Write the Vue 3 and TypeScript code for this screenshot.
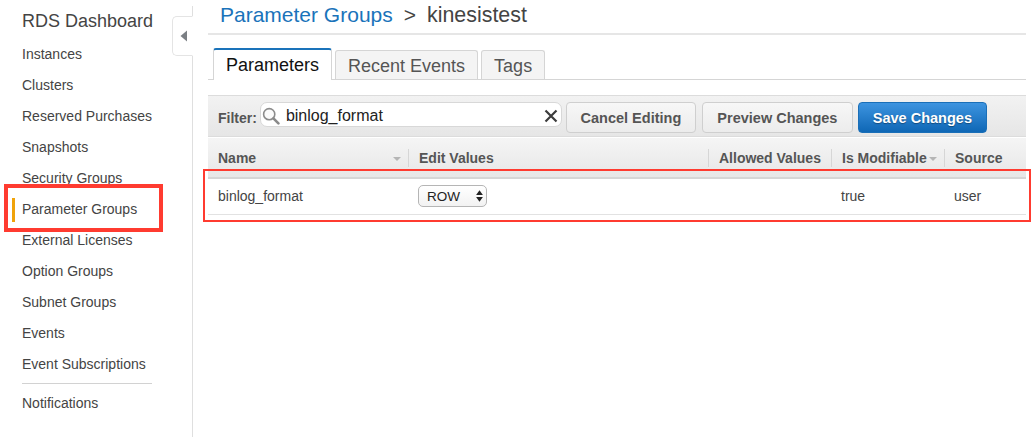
<script setup lang="ts">
const navTop: string[] = ['Instances', 'Clusters', 'Reserved Purchases', 'Snapshots', 'Security Groups', 'Parameter Groups', 'External Licenses', 'Option Groups', 'Subnet Groups', 'Events', 'Event Subscriptions']
const tabs: string[] = ['Parameters', 'Recent Events', 'Tags']
</script>

<template>
  <div class="page">
    <aside class="sidebar">
      <h1 class="brand">RDS Dashboard</h1>
      <ul class="nav">
        <li v-for="item in navTop" :key="item" class="nav-item" :class="{ active: item === 'Parameter Groups' }">{{ item }}</li>
      </ul>
      <div class="nav-rule"></div>
      <div class="nav-item last">Notifications</div>
      <div class="collapse">
        <svg width="8" height="12" viewBox="0 0 8 12"><path d="M7 0.5V11.5L0.5 6Z" fill="#7b7f84" /></svg>
      </div>
    </aside>
    <main class="main">
      <div class="crumbs">
        <span class="crumb-link">Parameter Groups</span>
        <span class="crumb-sep">&gt;</span>
        <span class="crumb-name">kinesistest</span>
      </div>
      <div class="tabs">
        <div v-for="(t, i) in tabs" :key="t" class="tab" :class="{ on: i === 0 }">{{ t }}</div>
      </div>
      <div class="toolbar">
        <span class="filter-label">Filter:</span>
        <div class="search">
          <svg class="lens" width="18" height="18" viewBox="0 0 18 18" fill="none">
            <circle cx="7.2" cy="7.2" r="5.6" stroke="#8c8c8c" stroke-width="1.6" fill="#fbfbfb" />
            <path d="M11.4 11.4L16.4 16.4" stroke="#8a8a8a" stroke-width="2.6" stroke-linecap="round" />
          </svg>
          <span class="search-text">binlog_format</span>
          <svg class="clear" width="14" height="14" viewBox="0 0 14 14"><path d="M1.5 1.5L12.5 12.5M12.5 1.5L1.5 12.5" stroke="#3c3c3c" stroke-width="2.2" /></svg>
        </div>
        <button class="btn cancel">Cancel Editing</button>
        <button class="btn preview">Preview Changes</button>
        <button class="btn save">Save Changes</button>
      </div>
      <div class="thead">
        <div class="th c-name">Name<span class="sort"></span></div>
        <div class="th c-edit">Edit Values</div>
        <div class="th c-allowed">Allowed Values</div>
        <div class="th c-mod">Is Modifiable<span class="sort"></span></div>
        <div class="th c-src">Source</div>
      </div>
      <div class="row">
        <div class="td c-name">binlog_format</div>
        <div class="td c-edit">
          <div class="select">
            <span>ROW</span>
            <svg width="7" height="12" viewBox="0 0 7 12"><path d="M3.5 0.3L6.9 5H0.1ZM3.5 11.7L0.1 7H6.9Z" fill="#222" /></svg>
          </div>
        </div>
        <div class="td c-allowed"></div>
        <div class="td c-mod">true</div>
        <div class="td c-src">user</div>
      </div>
    </main>
    <div class="mark mark-nav"></div>
    <div class="mark mark-row"></div>
  </div>
</template>

<style>
html, body { margin: 0; background: #fff; }
</style>

<style scoped>
.page {
  position: relative;
  display: flex;
  width: 1033px;
  height: 437px;
  overflow: hidden;
  background: #fff;
  font-family: "Liberation Sans", Arial, sans-serif;
  color: #444;
}
.sidebar {
  position: relative;
  box-sizing: border-box;
  width: 193px;
  height: 431px;
  margin-top: 6px;
  border-right: 1px solid #dfdfdf;
  flex: none;
}
.brand {
  margin: 5px 0 0 22px;
  font-size: 18px;
  line-height: 20px;
  font-weight: 400;
  color: #444;
}
.nav { list-style: none; margin: 8px 0 0; padding: 0; }
.nav-item {
  height: 31px;
  line-height: 31px;
  padding-left: 22px;
  font-size: 14px;
  color: #444;
  position: relative;
}
.nav-item.active::before {
  content: "";
  position: absolute;
  left: 12px;
  top: 4px;
  width: 3px;
  height: 24px;
  background: #f0a30a;
}
.nav-rule {
  width: 130px;
  height: 1px;
  background: #d2d2d2;
  margin: 3px 0 0 22px;
}
.nav-item.last { margin-top: 4px; }
.collapse {
  position: absolute;
  right: -1px;
  top: 10px;
  box-sizing: border-box;
  width: 21px;
  height: 40px;
  border: 1px solid #e4e4e4;
  border-right: 1px solid #fff;
  border-radius: 5px 0 0 5px;
  background: #fff;
  display: flex;
  align-items: center;
  padding-left: 7px;
}
.main {
  box-sizing: border-box;
  margin-left: 15px;
  width: 818px;
  flex: none;
}
.crumbs {
  box-sizing: border-box;
  height: 35px;
  border-bottom: 2px solid #e6e6e6;
  padding: 3px 0 0 12px;
  font-size: 21px;
  line-height: 24px;
  color: #444;
  white-space: nowrap;
}
.crumb-link { color: #1a73ba; }
.crumb-sep { margin: 0 11px; }
.crumb-name { font-size: 21.4px; }
.tabs {
  display: flex;
  align-items: flex-end;
  gap: 3px;
  padding-left: 5px;
  margin-top: 13px;
  height: 31px;
  border-bottom: 1px solid #d5d5d5;
}
.tab {
  box-sizing: border-box;
  height: 29px;
  padding: 0 12px;
  font-size: 18px;
  line-height: 30px;
  color: #555;
  background: #f4f4f4;
  border: 1px solid #d5d5d5;
  border-bottom: none;
  border-radius: 3px 3px 0 0;
  white-space: nowrap;
}
.tab.on {
  align-self: flex-start;
  height: 32px;
  color: #111;
  background: #fff;
  border-top: 2px solid #1a73ba;
  line-height: 31px;
  position: relative;
}
.toolbar {
  box-sizing: border-box;
  margin-top: 15px;
  height: 42px;
  display: flex;
  align-items: center;
  padding: 0 0 0 10px;
  background: linear-gradient(#f2f2f2, #e6e6e6);
  border-top: 1px solid #dcdcdc;
  border-bottom: 1px solid #dcdcdc;
}
.filter-label { font-size: 14px; font-weight: 700; color: #555; margin: 4px 3px 0 0; }
.search {
  box-sizing: border-box;
  width: 302px;
  height: 25px;
  background: #fff;
  border: 1px solid #d8d8d8;
  border-radius: 7px;
  display: flex;
  align-items: center;
  padding: 3px 3px 0 1px;
  margin-top: -3px;
}
.lens { flex: none; }
.search-text {
  flex: 1;
  margin-left: 6px;
  font-size: 16px;
  color: #222;
}
.btn {
  box-sizing: border-box;
  height: 31px;
  padding: 0;
  border: 1px solid #cfcfcf;
  border-radius: 4px;
  background: linear-gradient(#f7f7f7, #ececec);
  font-family: "Liberation Sans", Arial, sans-serif;
  font-size: 14.5px;
  font-weight: 700;
  color: #555;
  margin: 3px 0 0 5px;
}
.cancel { width: 130px; margin-left: 4px; }
.preview { width: 151px; margin-left: 6px; }
.save {
  width: 129px;
  margin-left: 5px;
  color: #fff;
  background: linear-gradient(#3d94e0, #0f67b5);
  border-color: #1a6fb8;
  text-shadow: 0 1px 1px rgba(0, 0, 0, .35);
}
.thead {
  box-sizing: border-box;
  height: 42px;
  display: flex;
  background: linear-gradient(#f5f5f5, #e7e7e7);
  border-top: 1px solid #fff;
  border-bottom: 2px solid #d6d6d6;
}
.th {
  box-sizing: border-box;
  position: relative;
  height: 18px;
  margin-top: 11px;
  line-height: 18px;
  font-size: 14px;
  font-weight: 700;
  color: #555;
  padding-left: 10px;
  white-space: nowrap;
}
.th + .th { border-left: 1px solid #d6d6d6; }
.c-name { width: 200px; }
.c-edit { width: 300px; }
.c-allowed { width: 123px; }
.c-mod { width: 113px; }
.c-src { width: 82px; }
.sort {
  position: absolute;
  right: 7px;
  top: 8px;
  border-left: 4px solid transparent;
  border-right: 4px solid transparent;
  border-top: 4px solid #b5b5b5;
}
.row {
  box-sizing: border-box;
  height: 36px;
  padding-bottom: 1px;
  display: flex;
  align-items: center;
  border-bottom: 1px solid #e2e2e2;
  font-size: 14px;
  color: #444;
}
.td { box-sizing: border-box; padding-left: 10px; }
.select {
  box-sizing: border-box;
  width: 69px;
  height: 22px;
  display: flex;
  align-items: center;
  justify-content: space-between;
  padding: 0 3px 0 8px;
  border: 1px solid #b5b5b5;
  border-radius: 5px;
  background: linear-gradient(#fff, #f2f2f2);
  color: #222;
  font-size: 13.5px;
}
.mark { position: absolute; box-sizing: border-box; border-style: solid; border-color: #ff3b30; }
.mark-nav { left: 4px; top: 184px; width: 159px; height: 48px; border-width: 4px; }
.mark-row { left: 203px; top: 169px; width: 828px; height: 53px; border-width: 2px; }
</style>
